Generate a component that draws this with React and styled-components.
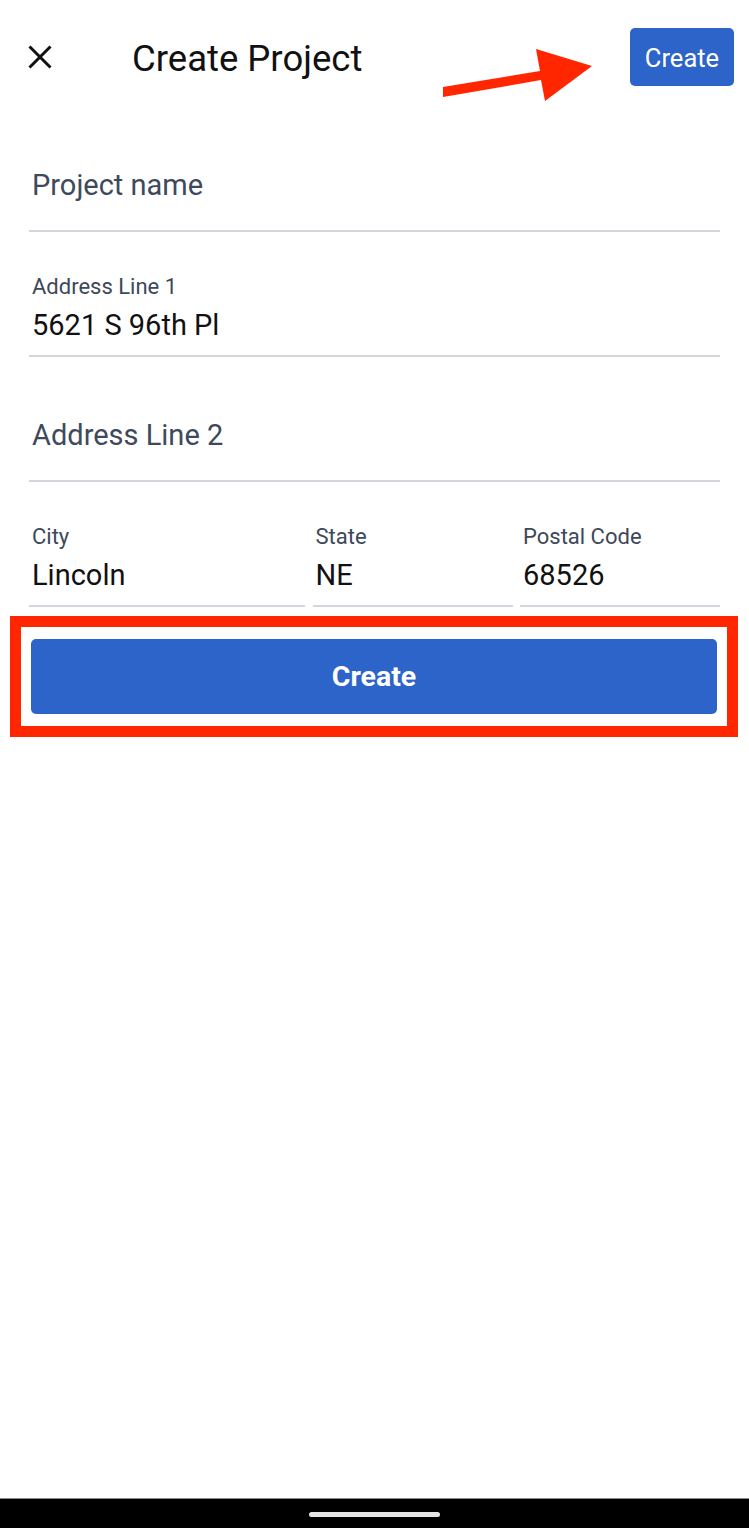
import React from "react";
import styled, { createGlobalStyle } from "styled-components";

const Global = createGlobalStyle`
  html, body { margin: 0; padding: 0; background: #ffffff; }
  body { font-family: Roboto, "Noto Sans", "Liberation Sans", sans-serif; }
  * { box-sizing: border-box; }
`;

const Screen = styled.div`
  display: flex;
  flex-direction: column;
  min-height: 100vh;
  background: #ffffff;
`;

const Header = styled.header`
  position: relative;
  height: 107px;
  padding: 28px 15px 0 28px;
  display: flex;
  align-items: flex-start;
`;

const HeaderRow = styled.div`
  display: flex;
  align-items: center;
  height: 58px;
  width: 100%;
`;

const CloseButton = styled.button`
  width: 24px;
  height: 24px;
  padding: 0;
  border: none;
  background: none;
  display: flex;
  align-items: center;
  justify-content: center;
  margin-top: -1px;
`;

const Title = styled.h1`
  margin: 4px 0 0 80px;
  font-size: 36.5px;
  font-weight: 400;
  color: #111111;
  letter-spacing: 0;
  flex: 1;
  line-height: 1;
`;

const SmallButton = styled.button`
  height: 58px;
  width: 104px;
  border: none;
  border-radius: 5px;
  background: #2d64c9;
  color: #ffffff;
  font-family: Roboto, "Noto Sans", sans-serif;
  font-size: 25.5px;
  font-weight: 400;
  padding: 2px 0 0;
`;

const Arrow = styled.svg`
  position: absolute;
  left: 440px;
  top: 45px;
`;

const Form = styled.div`
  padding: 0 29px;
  display: flex;
  flex-direction: column;
`;

const Field = styled.div`
  height: 125px;
  border-bottom: 2px solid #d3d6dc;
  display: flex;
  flex-direction: column;
  justify-content: flex-end;
  padding: 0 3px ${(p) => (p.$placeholder ? "27px" : "12px")};
`;

const Label = styled.div`
  font-size: 22px;
  line-height: 26px;
  color: #3d4859;
  margin-bottom: 7px;
  white-space: nowrap;
`;

const Value = styled.div`
  font-size: 29px;
  line-height: 36px;
  color: ${(p) => (p.$placeholder ? "#3e4a5c" : "#111111")};
  white-space: nowrap;
`;

const Row = styled.div`
  display: grid;
  grid-template-columns: 1fr 200px 200px;
  column-gap: 7.5px;
`;

const Highlight = styled.div`
  margin: 9px 11px 0 10px;
  border: 11px solid #ff2600;
  padding: 12px 10px;
`;

const PrimaryButton = styled.button`
  width: 100%;
  height: 75px;
  border: none;
  border-radius: 5px;
  background: #2d64c9;
  color: #ffffff;
  font-family: Roboto, "Noto Sans", sans-serif;
  font-size: 28.5px;
  font-weight: 700;
  padding: 0;
`;

const Spacer = styled.div`
  flex: 1;
`;

const NavBar = styled.div`
  height: 30px;
  background: #000000;
  border-top: 1px solid #8a8a8a;
  display: flex;
  justify-content: center;
  align-items: flex-start;
  padding-top: 13px;
`;

const Handle = styled.div`
  width: 131px;
  height: 5px;
  border-radius: 3px;
  background: #e4e4e4;
`;

function TextField({ label, value, placeholder }) {
  if (placeholder) {
    return (
      <Field $placeholder>
        <Value $placeholder>{placeholder}</Value>
      </Field>
    );
  }
  return (
    <Field>
      <Label>{label}</Label>
      <Value>{value}</Value>
    </Field>
  );
}

export default function App() {
  return (
    <>
      <Global />
      <Screen>
        <Header>
          <HeaderRow>
            <CloseButton aria-label="Close">
              <svg width="24" height="24" viewBox="0 0 24 24">
                <path
                  d="M1.5 1.5 L22.5 22.5 M22.5 1.5 L1.5 22.5"
                  stroke="#111"
                  strokeWidth="3"
                  strokeLinecap="butt"
                  fill="none"
                />
              </svg>
            </CloseButton>
            <Title>Create Project</Title>
            <SmallButton>Create</SmallButton>
          </HeaderRow>
          <Arrow width="160" height="60" viewBox="0 0 160 60">
            <polygon
              points="3,42 100,26 96,4 152,21 105,56 101,35 3,52"
              fill="#ff2600"
            />
          </Arrow>
        </Header>
        <Form>
          <TextField placeholder="Project name" />
          <TextField label="Address Line 1" value="5621 S 96th Pl" />
          <TextField placeholder="Address Line 2" />
          <Row>
            <TextField label="City" value="Lincoln" />
            <TextField label="State" value="NE" />
            <TextField label="Postal Code" value="68526" />
          </Row>
        </Form>
        <Highlight>
          <PrimaryButton>Create</PrimaryButton>
        </Highlight>
        <Spacer />
        <NavBar>
          <Handle />
        </NavBar>
      </Screen>
    </>
  );
}
